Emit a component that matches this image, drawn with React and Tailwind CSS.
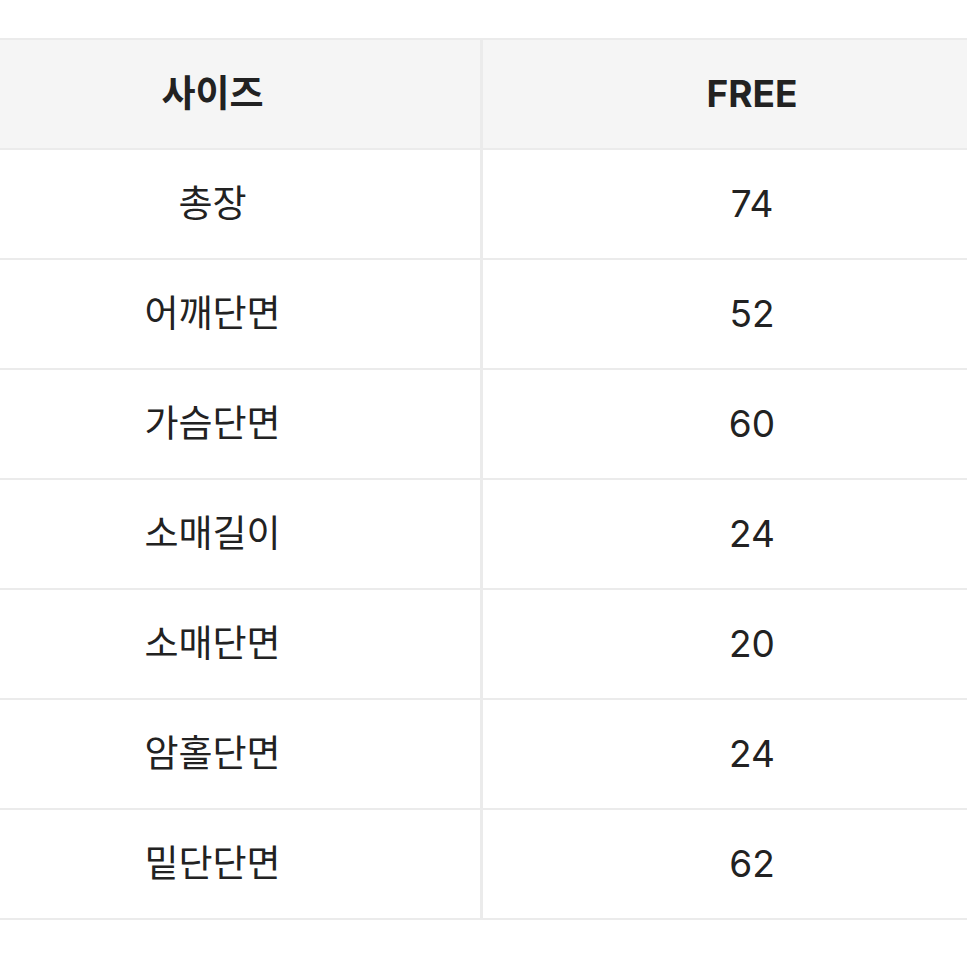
export default function App() {
  const rows = [
    ["총장", "74"],
    ["어깨단면", "52"],
    ["가슴단면", "60"],
    ["소매길이", "24"],
    ["소매단면", "20"],
    ["암홀단면", "24"],
    ["밑단단면", "62"],
  ];
  const font = { fontFamily: '"Inter", "Noto Sans CJK KR", sans-serif' };
  return (
    <div className="w-[967px] h-[967px] overflow-hidden bg-white pt-[38px]" style={font}>
      <div className="ml-[-55px] w-[1076px] border-t-2 border-[#ebebeb] text-[#222222]">
        <div className="grid grid-cols-2 h-[110px] bg-[#f5f5f5] border-b-2 border-[#ebebeb]">
          <div className="flex items-center justify-center border-r-[3px] border-[#ebebeb] text-[37px] font-bold">사이즈</div>
          <div className="flex items-center justify-center text-[37px] font-bold">FREE</div>
        </div>
        {rows.map(([k, v]) => (
          <div key={k} className="grid grid-cols-2 h-[110px] border-b-2 border-[#ebebeb]">
            <div className="flex items-center justify-center border-r-[3px] border-[#ebebeb] text-[37px]">{k}</div>
            <div className="flex items-center justify-center text-[37px]">{v}</div>
          </div>
        ))}
      </div>
    </div>
  );
}
